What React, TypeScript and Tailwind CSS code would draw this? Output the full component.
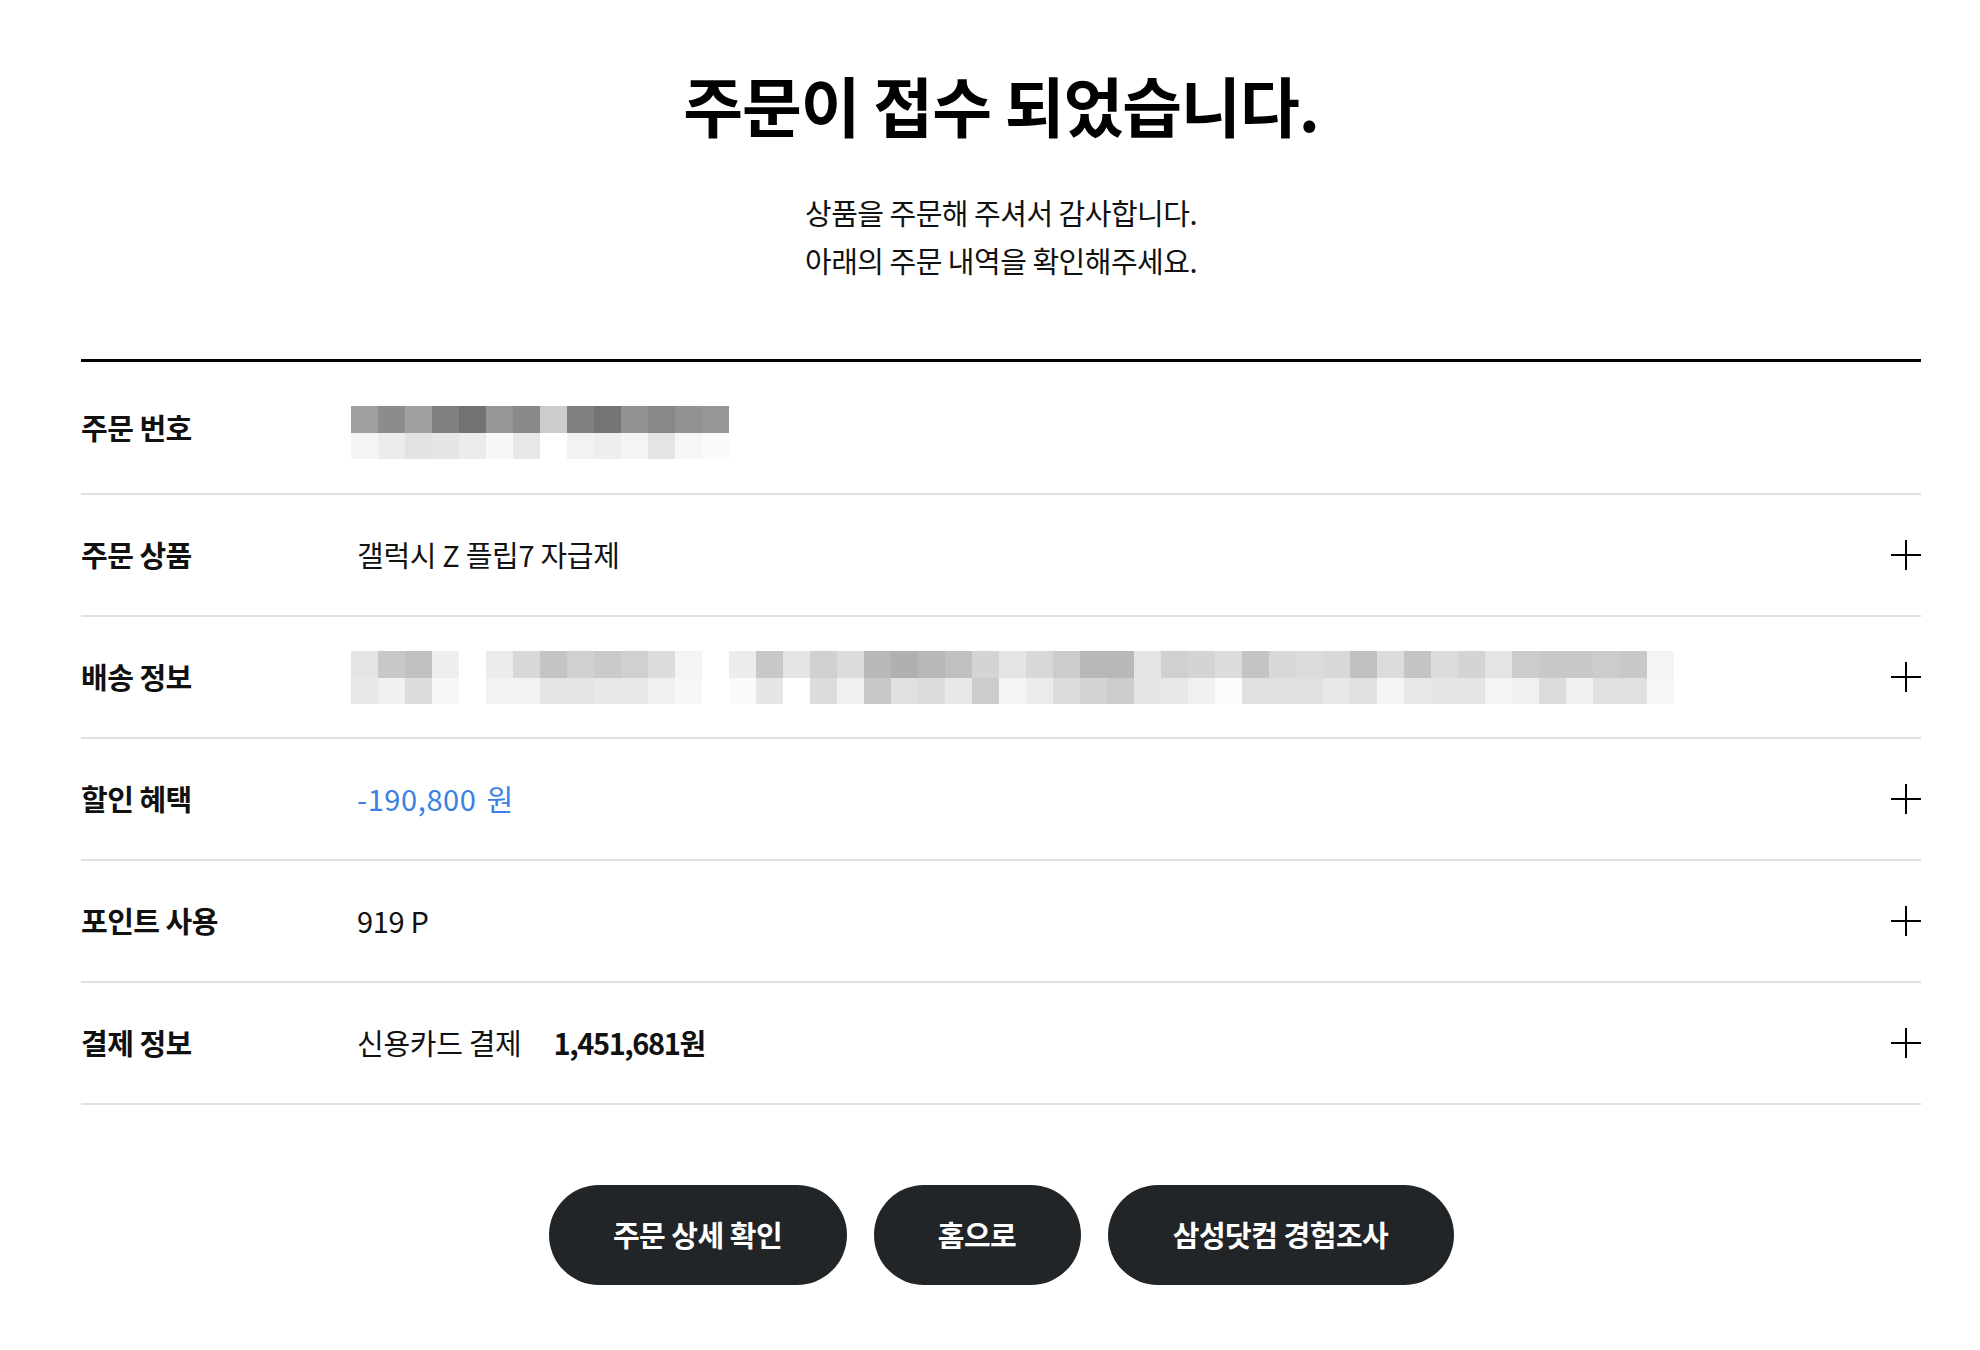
const orderTop = ["#a0a0a0", "#8c8c8c", "#a0a0a0", "#808080", "#727272", "#969696", "#8a8a8a", "#cccccc", "#808080", "#747474", "#929292", "#888888", "#929292", "#969696"];
const orderBottom = ["#f4f4f4", "#ececec", "#e2e2e2", "#e6e6e6", "#ececec", "#f8f8f8", "#e8e8e8", "#ffffff", "#f2f2f2", "#eeeeee", "#f4f4f4", "#e4e4e4", "#f6f6f6", "#fafafa"];

const shipTop = [
  "#e4e4e4", "#c8c8c8", "#c0c0c0", "#efefef", "#ffffff", "#ececec", "#d8d8d8", "#c4c4c4", "#d0d0d0", "#cacaca",
  "#d0d0d0", "#dcdcdc", "#f4f4f4", "#ffffff", "#ececec", "#c8c8c8", "#e4e4e4", "#d0d0d0", "#dcdcdc", "#b8b8b8",
  "#b0b0b0", "#b8b8b8", "#c0c0c0", "#d4d4d4", "#e4e4e4", "#d8d8d8", "#cccccc", "#b8b8b8", "#b8b8b8", "#e4e4e4",
  "#d0d0d0", "#d4d4d4", "#dcdcdc", "#c4c4c4", "#d8d8d8", "#dcdcdc", "#d8d8d8", "#c0c0c0", "#dcdcdc", "#c4c4c4",
  "#dcdcdc", "#d4d4d4", "#e4e4e4", "#cccccc", "#c8c8c8", "#c8c8c8", "#cccccc", "#c8c8c8", "#f4f4f4",
];
const shipBottom = [
  "#e8e8e8", "#f0f0f0", "#dcdcdc", "#f8f8f8", "#ffffff", "#f2f2f2", "#f2f2f2", "#e4e4e4", "#e4e4e4", "#e8e8e8",
  "#e8e8e8", "#f0f0f0", "#f6f6f6", "#ffffff", "#fafafa", "#e6e6e6", "#ffffff", "#dcdcdc", "#f0f0f0", "#c8c8c8",
  "#e0e0e0", "#dcdcdc", "#e8e8e8", "#cccccc", "#f4f4f4", "#ececec", "#dcdcdc", "#d4d4d4", "#cccccc", "#e4e4e4",
  "#e8e8e8", "#f0f0f0", "#fcfcfc", "#e0e0e0", "#e0e0e0", "#e0e0e0", "#e8e8e8", "#e0e0e0", "#f4f4f4", "#e8e8e8",
  "#e4e4e4", "#e4e4e4", "#f4f4f4", "#f0f0f0", "#dcdcdc", "#f0f0f0", "#e0e0e0", "#e0e0e0", "#f6f6f6",
];

// blurred (mosaic) block for hidden personal data
function Mosaic({ top, bottom }: { top: string[]; bottom: string[] }) {
  return (
    <div className="flex flex-col">
      <div className="flex">
        {top.map((c, i) => (
          <div key={i} className="w-[27px] h-[27px]" style={{ backgroundColor: c }} />
        ))}
      </div>
      <div className="flex">
        {bottom.map((c, i) => (
          <div key={i} className="w-[27px] h-[26px]" style={{ backgroundColor: c }} />
        ))}
      </div>
    </div>
  );
}

function PlusIcon() {
  return (
    <svg width="32" height="32" viewBox="0 0 32 32" className="shrink-0 -mr-[1px]">
      <path d="M16 1v30M1 16h30" stroke="#000" strokeWidth="2" fill="none" />
    </svg>
  );
}

function Row({
  label,
  children,
  expandable = true,
  tall = false,
}: {
  label: string;
  children: React.ReactNode;
  expandable?: boolean;
  tall?: boolean;
}) {
  return (
    <div
      className={`flex items-center border-b-2 border-[#e0e0e0] ${tall ? "h-[133px]" : "h-[122px]"}`}
    >
      <div className="w-[276px] shrink-0 text-[29px] font-bold text-[#111] tracking-[-0.5px]">
        {label}
      </div>
      <div className="flex-1 flex items-center text-[29px] text-[#111] tracking-[-0.3px]">{children}</div>
      {expandable && <PlusIcon />}
    </div>
  );
}

export default function App() {
  return (
    <div className="min-h-screen bg-white font-['Noto_Sans_CJK_KR','Noto_Sans',sans-serif]">
      <div className="ml-[81px] w-[1840px] pt-[64px] pb-[64px]">
        <h1 className="text-center text-[65px] leading-[80px] font-bold text-black tracking-[-1px]">
          주문이 접수 되었습니다.
        </h1>
        <p className="mt-[44px] text-center text-[29px] leading-[48px] text-[#111] tracking-[-0.5px]">
          상품을 주문해 주셔서 감사합니다.
          <br />
          아래의 주문 내역을 확인해주세요.
        </p>

        <div className="mt-[75px] border-t-[3px] border-black">
          <Row label="주문 번호" expandable={false} tall>
            <div className="-ml-[6px] mt-[10px]">
              <Mosaic top={orderTop} bottom={orderBottom} />
            </div>
          </Row>
          <Row label="주문 상품">
            <span>갤럭시 Z 플립7 자급제</span>
          </Row>
          <Row label="배송 정보">
            <div className="-ml-[6px]">
              <Mosaic top={shipTop} bottom={shipBottom} />
            </div>
          </Row>
          <Row label="할인 혜택">
            <span className="text-[#3b80e4] tracking-[0.6px] [word-spacing:3px]">-190,800 원</span>
          </Row>
          <Row label="포인트 사용">
            <span>919 P</span>
          </Row>
          <Row label="결제 정보">
            <span>신용카드 결제</span>
            <span className="ml-[32px] font-bold tracking-[-1.4px]">1,451,681원</span>
          </Row>
        </div>

        <div className="mt-[80px] flex justify-center gap-[27px]">
          <button className="w-[298px] h-[100px] rounded-full bg-[#222527] text-white text-[29px] font-bold tracking-[-0.5px]">
            주문 상세 확인
          </button>
          <button className="w-[207px] h-[100px] rounded-full bg-[#222527] text-white text-[29px] font-bold tracking-[-0.5px]">
            홈으로
          </button>
          <button className="w-[346px] h-[100px] rounded-full bg-[#222527] text-white text-[29px] font-bold tracking-[-0.5px]">
            삼성닷컴 경험조사
          </button>
        </div>
      </div>
    </div>
  );
}
